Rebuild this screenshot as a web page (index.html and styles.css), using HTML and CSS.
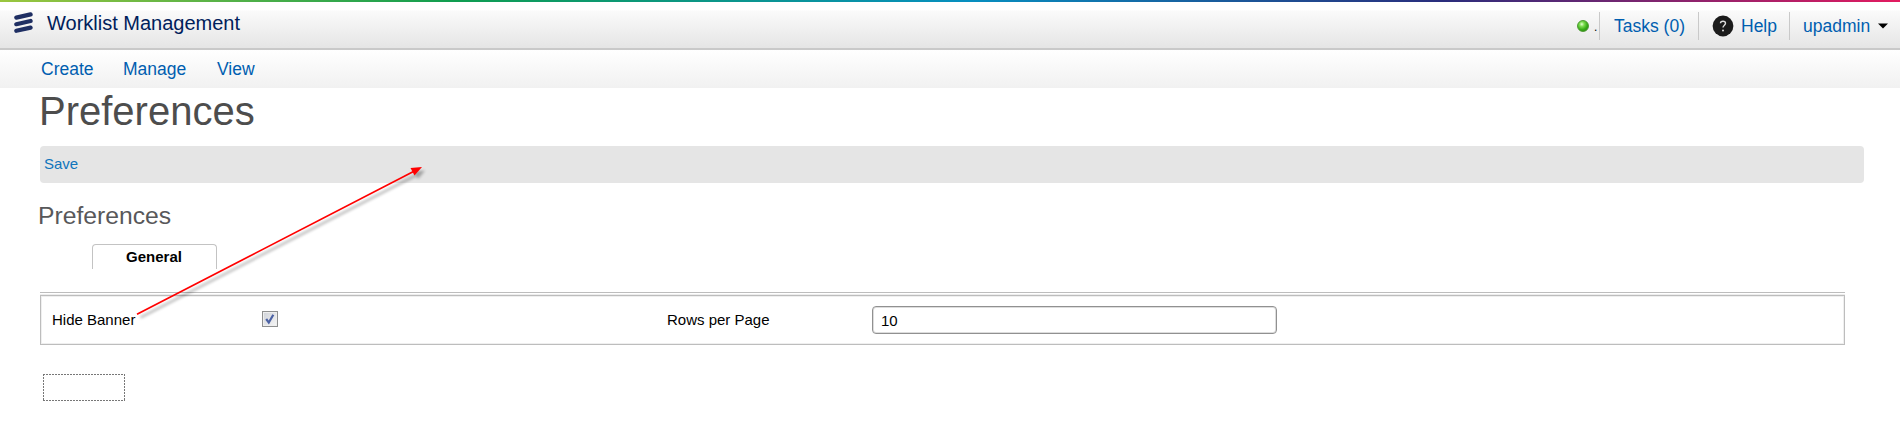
FILE: index.html
```html
<!DOCTYPE html>
<html lang="en">
<head>
<meta charset="utf-8">
<title>Worklist Management</title>
<link rel="stylesheet" href="styles.css">
</head>
<body>
<header class="topbar">
  <svg class="logo" width="20" height="24" viewBox="0 0 20 24"><g stroke="#1f2f63" stroke-width="4.2" stroke-linecap="round"><path d="M3.3 7.6L17.600 4.400M3.3 14.2L17.600 11M3.300 20.800L17.600 17.600"/></g></svg>
  <span class="brand">Worklist Management</span>
  <div class="status"><span class="led"></span><span class="dot">.</span></div>
  <a class="item tasks">Tasks (0)</a>
  <a class="item help"><svg width="22" height="22" viewBox="0 0 22 22"><circle cx="11" cy="11" r="10.4" fill="#1b1b1b"/><path d="M8.500 8.3C8.500 5.600 13.500 5.600 13.500 8.300C13.500 10.200 11 10.200 11 12.600" fill="none" stroke="#ddd" stroke-width="1.4"/><circle cx="11" cy="15.400" r="1" fill="#ddd"/></svg><span>Help</span></a>
  <a class="item user"><span>upadmin</span><svg width="10" height="6" viewBox="0 0 10 6"><path d="M0 .5H10L5 5.5Z" fill="#000"/></svg></a>
</header>
<nav class="menu"><a class="create">Create</a><a class="manage">Manage</a><a>View</a></nav>
<main class="content">
  <h1 class="title">Preferences</h1>
  <div class="toolbar"><a>Save</a></div>
  <h2 class="subtitle">Preferences</h2>
  <div class="tabs"><div class="tab">General</div></div>
  <div class="rule"></div>
  <section class="panel">
    <label class="hide-label">Hide Banner</label>
    <span class="check"><svg width="12" height="12" viewBox="0 0 12 12"><path d="M2.2 6L4.8 9.6L9.3 1.8" fill="none" stroke="#4c62a4" stroke-width="2.2"/></svg></span>
    <label class="rows-label">Rows per Page</label>
    <div class="field">10</div>
  </section>
  <div class="focus-box"></div>
</main>
<svg class="arrow" width="310" height="170" viewBox="0 0 310 170">
  <defs><filter id="soft" x="-10%" y="-10%" width="120%" height="120%"><feGaussianBlur stdDeviation="1.6"/></filter></defs>
  <g filter="url(#soft)" opacity=".3" transform="translate(3.5 3.5)"><path d="M7 154L284 11" stroke="#000" stroke-width="2"/><path d="M291.5 7L280.5 8L284.5 15.5Z"/></g>
  <path d="M7 154.3L284 11.3" stroke="#f00" stroke-width="1.7"/><path d="M292 7L280.5 8L284.5 15.500Z" fill="#f00"/>
</svg>
</body>
</html>
```
FILE: styles.css
```css
* { box-sizing: border-box; }
body { margin: 0; background: #fff; font-family: Arial, "Liberation Sans", sans-serif; font-size: 15px; color: #000; position: relative; height: 438px; overflow: hidden; }
.topbar { display: flex; height: 50px; padding: 10px 10px 0 13px; border-bottom: 2px solid #c9c9c9; background: linear-gradient(90deg, #9bc63f 0, #0f9d50 24%, #078fc0 51%, #2a2d7c 76%, #e31b60 100%) top / 100% 2px no-repeat, linear-gradient(#fff 0, #fff 20%, #fafafa 24%, #e5e5e5 100%); }
.logo { display: block; }
.brand { font-size: 20px; line-height: 26px; margin-left: 14px; color: #00205b; }
.status { margin-left: auto; width: 60px; height: 28px; margin-top: 2px; display: flex; padding: 8px 0 0 38px; }
.led { width: 12px; height: 12px; border-radius: 50%; border: 1px solid #4b9931; background: radial-gradient(circle at 38% 32%, #e4ffd4 0, #7ddd50 25%, #38ad17 58%, #237a0c 100%); }
.dot { font-size: 12px; line-height: 14px; margin-left: 5px; }
.item { display: flex; align-items: center; height: 28px; margin-top: 2px; border-left: 1px solid #c9c9c9; color: #005eb0; font-size: 17.5px; line-height: 26px; }
.tasks { width: 99px; padding-left: 14px; }
.help { width: 91px; padding-left: 13px; gap: 7px; }
.user { width: 101px; padding-left: 13px; gap: 8px; }
.item span { line-height: 26px; }
.menu { display: flex; height: 38px; padding-left: 41px; background: linear-gradient(#fff, #f1f1f1); font-size: 17.5px; line-height: 38px; color: #005eb0; }
.create { width: 82px; }
.manage { width: 94px; }
.content { padding-left: 40px; }
.title { margin: 0; height: 58px; font-size: 40px; font-weight: 400; line-height: 46px; color: #4d4d4d; margin-left: -1px; }
.toolbar { width: 1824px; height: 37px; border-radius: 4px; background: #e5e5e5; padding-left: 4px; line-height: 35px; color: #0f75bc; }
.subtitle { margin: 18px 0 0 -2px; height: 43px; font-size: 24.7px; font-weight: 400; line-height: 30px; color: #58585a; }
.tabs { padding-left: 52px; height: 48px; }
.tab { width: 125px; height: 25px; border: 1px solid #c3c3c3; border-bottom: 0; border-radius: 4px 4px 0 0; text-align: center; font-weight: 700; line-height: 23px; padding-right: 1px; }
.rule { width: 1805px; height: 3px; border-top: 1px solid #bdbdbd; border-bottom: 1px solid #ededed; }
.panel { width: 1805px; height: 50px; border: 1px solid #bdbdbd; box-shadow: inset 0 0 0 1px #efefef; display: flex; align-items: center; padding-left: 10px; }
.hide-label, .rows-label { position: relative; top: -1px; padding-left: 1px; }
.hide-label { width: 211px; }
.check { width: 16px; height: 16px; border: 1px solid #8e8f8f; background: linear-gradient(135deg, #cfd2d8, #f6f6f6); box-shadow: inset 0 0 0 1px #eee; display: flex; padding: 1px; margin-top: -2px; }
.rows-label { margin-left: 388px; width: 206px; }
.field { width: 405px; height: 28px; border: 1px solid #919191; border-radius: 4px; box-shadow: inset 0 0 0 1px #ddd; padding-left: 8px; line-height: 28px; }
.focus-box {
  --h: repeating-linear-gradient(90deg, #777 0 2px, transparent 2px 3px);
  --v: repeating-linear-gradient(#777 0 2px, transparent 2px 3px);
  margin: 29px 0 0 3px; width: 82px; height: 27px;
  background: var(--h) top / 100% 1px no-repeat, var(--h) bottom / 100% 1px no-repeat, var(--v) left / 1px 100% no-repeat, var(--v) right / 1px 100% no-repeat;
}
.arrow { position: absolute; left: 130px; top: 160px; }
```
